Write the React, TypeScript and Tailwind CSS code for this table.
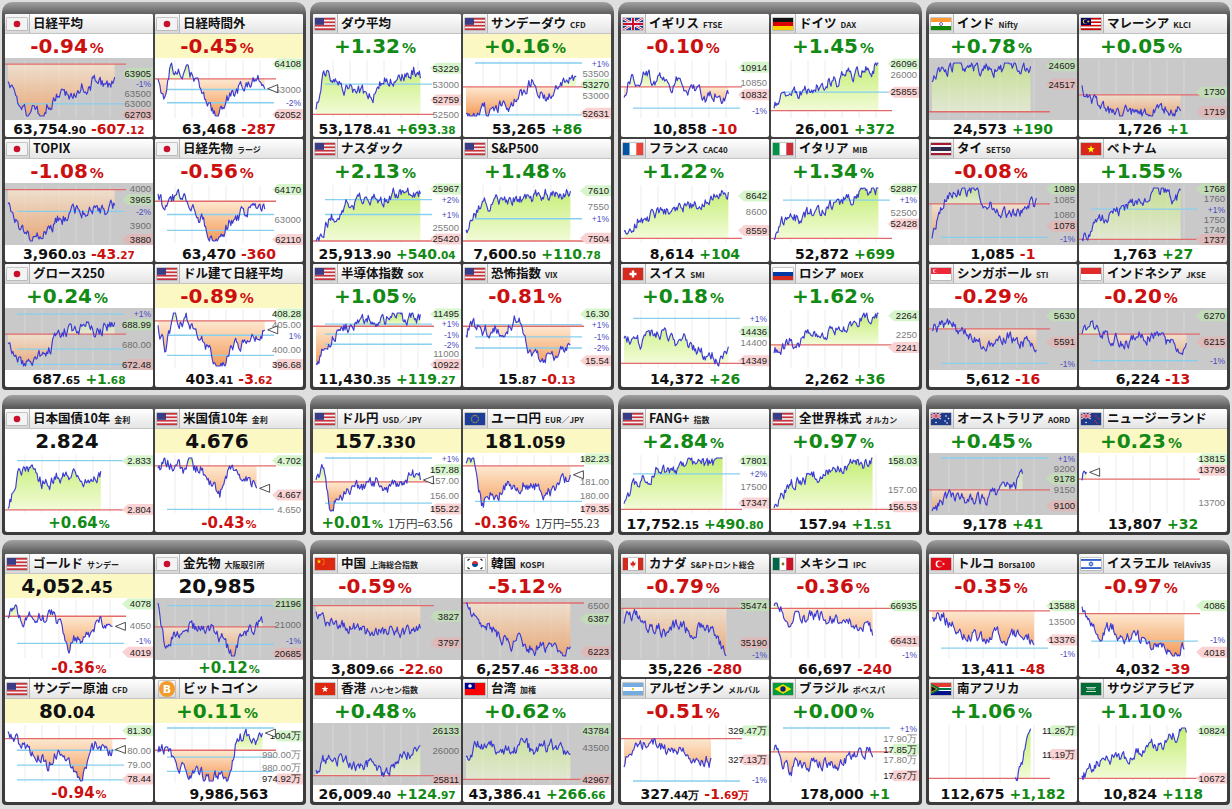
import React from 'react';

// one tile of the market board
type D = {
  f: string;
  t: string;
  s?: string;
  p: string;
  v?: string[];
  c?: string[];
  tv?: string[];
  x?: string;
  g?: number; // market closed -> gray chart
  y?: number; // yellow header band
  m?: number; // last price marker
  a: string; // anchors 0 (high) .. 9 (low)
  b: number; // previous close line
  e?: number;
  st?: number;
  L: string;
  B?: number[];
};

const B1: D[][] = [
  [
    { f: 'jp', t: '日経平均', p: '-0.94', v: ['63,754', '.90'], c: ['-607', '.12'], g: 1, a: '4 6 8 9 8 9 7 6 4 5 5 4 4 3 4 4 3', b: 0.02, e: 0.92, L: 'h 63905 .2|p -1% .39|t 63500 .58|t 63000 .77|l 62703 .97', B: [0.77] },
    { f: 'jp', t: '日経時間外', p: '-0.45', v: ['63,468'], c: ['-287'], y: 1, m: 1, a: '2 6 1 1 2 2 3 5 7 9 8 6 5 4 4 3 3 3', b: 0.3, e: 0.92, L: 'h 64108 .02|t 63000 .5|p -2% .75|l 62052 .97', B: [0.5, 0.75] },
    { f: 'jp', t: 'TOPIX', p: '-1.08', v: ['3,960', '.03'], c: ['-43', '.27'], g: 1, a: '3 6 7 9 8 7 5 5 4 4 3 3 4 3', b: 0.03, e: 0.92, L: 't 4000 .02|h 3965 .22|p -2% .44|t 3900 .72|l 3880 .97', B: [0.44] },
    { f: 'jp', t: '日経先物', s: 'ラージ', p: '-0.56', v: ['63,470'], c: ['-360'], a: '1 4 2 1 2 3 5 7 9 8 6 5 4 3 4 3', b: 0.25, e: 0.92, L: 'h 64170 .03|t 63000 .6|l 62110 .97', B: [0.5, 0.8] },
    { f: 'jp', t: 'グロース250', p: '+0.24', v: ['687', '.65'], c: ['+1', '.68'], g: 1, a: '6 8 9 8 7 6 4 3 3 3 2 3 2 2', b: 0.4, e: 0.92, L: 'p +1% .02|h 688.99 .22|t 680.00 .6|l 672.48 .97', B: [0.02, 0.68, 0.97] },
    { f: 'us', t: 'ドル建て日経平均', p: '-0.89', v: ['403', '.41'], c: ['-3', '.62'], y: 1, m: 1, a: '3 6 1 2 1 3 5 7 9 8 6 5 4 4 3', b: 0.15, e: 0.92, L: 'h 408.28 .02|t 405.00 .22|p 1% .42|t 400.00 .7|l 396.68 .97', B: [0.42, 0.8] },
  ],
  [
    { f: 'us', t: 'ダウ平均', p: '+1.32', v: ['53,178', '.41'], c: ['+693', '.38'], a: '8 1 2 3 4 4 5 5 6 4 3 3 2 2 1 2', b: 0.97, e: 0.9, L: 'h 53229 .1|t 53000 .4|l 52759 .7|t 52500 .97', B: [0.4] },
    { f: 'us', t: 'サンデーダウ', s: 'CFD', p: '+0.16', v: ['53,265'], c: ['+86'], y: 1, a: '9 9 8 8 8 7 7 6 5 3 5 6 4 3 3 2', b: 0.45, e: 0.95, L: 'p +1% .0|t 53500 .2|h 53270 .4|t 53000 .61|l 52631 .95', B: [0, 0.98] },
    { f: 'us', t: 'ナスダック', p: '+2.13', v: ['25,913', '.90'], c: ['+540', '.04'], a: '9 7 5 4 3 3 2 2 2 2 1 1 1 1 1', b: 1, e: 0.9, L: 'h 25967 .02|p +2% .22|p +1% .5|t 25500 .74|l 25420 .96', B: [0.22, 0.5] },
    { f: 'us', t: 'S&P500', p: '+1.48', v: ['7,600', '.50'], c: ['+110', '.78'], a: '7 5 3 3 2 2 2 2 2 1 1 1 1 1', b: 1, e: 0.9, L: 'h 7610 .05|t 7550 .35|p +1% .58|l 7504 .95', B: [0.58] },
    { f: 'us', t: '半導体指数', s: 'SOX', p: '+1.05', v: ['11,430', '.35'], c: ['+119', '.27'], a: '9 6 4 3 2 2 1 1 1 0 1 1 1', b: 0.25, e: 0.9, L: 'h 11495 .02|p +1% .21|p -1% .4|p -2% .59|t 11000 .77|l 10922 .97', B: [0.21, 0.4, 0.59] },
    { f: 'us', t: '恐怖指数', s: 'VIX', p: '-0.81', v: ['15', '.87'], c: ['-0', '.13'], a: '3 2 3 3 2 3 2 0 5 7 8 7 8 6 6', b: 0.25, e: 0.9, L: 'h 16.30 .02|p +1% .22|p -1% .45|p -2% .66|l 15.54 .9', B: [0.22, 0.45, 0.66] },
  ],
  [
    { f: 'gb', t: 'イギリス', s: 'FTSE', p: '-0.10', v: ['10,858'], c: ['-10'], a: '5 2 3 2 3 3 4 3 4 4 5 6 5 6 5', b: 0.45, e: 0.9, L: 'h 10914 .08|t 10850 .38|l 10832 .6|p -1% .9', B: [0.85] },
    { f: 'de', t: 'ドイツ', s: 'DAX', p: '+1.45', v: ['26,001'], c: ['+372'], a: '7 6 5 5 4 4 4 3 3 2 2 1 1 0', b: 0.9, e: 0.9, L: 'h 26096 .02|t 26000 .22|l 25855 .55', B: [0.55] },
    { f: 'fr', t: 'フランス', s: 'CAC40', p: '+1.22', v: ['8,614'], c: ['+104'], a: '8 6 5 5 4 4 3 3 3 2 1 1 1', b: 0.95, e: 0.9, L: 'h 8642 .15|t 8600 .45|l 8559 .8' },
    { f: 'it', t: 'イタリア', s: 'MIB', p: '+1.34', v: ['52,872'], c: ['+699'], a: '8 6 5 5 4 4 3 3 2 2 1 1 0', b: 0.95, e: 0.9, L: 'h 52887 .02|p +1% .23|t 52500 .46|l 52428 .68', B: [0.23] },
    { f: 'ch', t: 'スイス', s: 'SMI', p: '+0.18', v: ['14,372'], c: ['+26'], a: '5 4 5 4 3 4 5 5 6 7 7 8 7', b: 0.95, e: 0.9, L: 'p +1% .1|h 14436 .35|t 14400 .56|l 14349 .9', B: [0.1] },
    { f: 'ru', t: 'ロシア', s: 'MOEX', p: '+1.62', v: ['2,262'], c: ['+36'], a: '7 6 5 5 4 3 4 3 3 2 2 1 1 0', b: 0.6, e: 0.9, L: 'h 2264 .05|t 2250 .4|l 2241 .65' },
  ],
  [
    { f: 'in', t: 'インド', s: 'Nifty', p: '+0.78', v: ['24,573'], c: ['+190'], g: 1, a: '3 1 1 0 1 1 1 1 1 1 1 1 1', b: 0.92, e: 0.85, L: 'h 24609 .05|l 24517 .4' },
    { f: 'my', t: 'マレーシア', s: 'KLCI', p: '+0.05', v: ['1,726'], c: ['+1'], g: 1, a: '4 6 7 8 9 8 8 9 8 8 8 8', b: 0.6, e: 0.85, L: 'h 1730 .55|l 1719 .92' },
    { f: 'th', t: 'タイ', s: 'SET50', p: '-0.08', v: ['1,085'], c: ['-1'], g: 1, a: '8 3 1 1 1 0 2 3 4 4 4 3 3', b: 0.3, e: 0.9, L: 'h 1089 .02|t 1085 .22|t 1080 .5|l 1078 .72|p -1% .95', B: [0.93] },
    { f: 'vn', t: 'ベトナム', p: '+1.55', v: ['1,763'], c: ['+27'], g: 1, a: '9 7 5 5 4 4 3 3 2 1 0 1 2 1', b: 0.97, e: 0.85, L: 'h 1768 .02|t 1760 .21|p +1% .4|t 1750 .59|t 1740 .78|l 1737 .97', B: [0.4] },
    { f: 'sg', t: 'シンガポール', s: 'STI', p: '-0.29', v: ['5,612'], c: ['-16'], g: 1, a: '3 2 2 3 4 5 5 4 4 5 5 5', b: 0.3, e: 0.9, L: 'h 5630 .05|l 5591 .55|p -1% .95', B: [0.95] },
    { f: 'id', t: 'インドネシア', s: 'JKSE', p: '-0.20', v: ['6,224'], c: ['-13'], g: 1, a: '3 2 3 4 5 5 4 4 4 5 6 5', b: 0.4, e: 0.9, L: 'h 6270 .05|l 6215 .55|p -1% .9', B: [0.9] },
  ],
];

const B2: D[][] = [
  [
    { f: 'jp', t: '日本国債10年', s: '金利', p: '+0.64', tv: ['2.824'], a: '9 3 1 3 4 4 3 3 3 5 4 3', b: 0.98, e: 0.8, L: 'h 2.833 .05|l 2.804 .97', B: [0.05] },
    { f: 'us', t: '米国債10年', s: '金利', p: '-0.43', tv: ['4.676'], y: 1, m: 1, a: '1 1 1 1 2 1 2 2 3 5 7 3 1 3 2 4 5', b: 0.15, e: 0.85, L: 'h 4.702 .05|l 4.667 .7|t 4.650 .97', B: [0.97] },
  ],
  [
    { f: 'us', t: 'ドル円', s: 'USD／JPY', p: '+0.01', tv: ['157', '.330'], x: '1万円=63.56', y: 1, m: 1, a: '3 2 9 6 6 5 5 5 4 5 5 4 4 3 4', b: 0.45, e: 0.9, L: 'p +1% .0|h 157.88 .22|t 157.00 .43|t 156.00 .72|l 155.22 .96', B: [0, 0.85] },
    { f: 'eu', t: 'ユーロ円', s: 'EUR／JPY', p: '-0.36', tv: ['181', '.059'], x: '1万円=55.23', y: 1, m: 1, a: '0 1 8 6 6 5 5 4 5 5 6 6 4 3', b: 0.15, e: 0.9, L: 'h 182.23 .02|t 181.00 .45|t 180.00 .72|l 179.35 .96', B: [0.82] },
  ],
  [
    { f: 'us', t: 'FANG+', s: '指数', p: '+2.84', v: ['17,752', '.15'], c: ['+490', '.80'], a: '8 5 4 3 2 2 2 1 1 1 1 1 0', b: 0.97, e: 0.85, L: 'h 17801 .05|p +2% .3|t 17500 .55|l 17347 .85', B: [0.3] },
    { f: 'us', t: '全世界株式', s: 'オルカン', p: '+0.97', v: ['157', '.94'], c: ['+1', '.51'], a: '8 6 5 4 4 3 3 2 2 2 1 1 1 0', b: 0.97, e: 0.85, L: 'h 158.03 .05|t 157.00 .6|l 156.53 .92' },
  ],
  [
    { f: 'au', t: 'オーストラリア', s: 'AORD', p: '+0.45', v: ['9,178'], c: ['+41'], g: 1, a: '9 8 7 7 7 7 7 7 6 6 5 4 3', b: 0.6, e: 0.78, L: 'p +1% .0|t 9200 .2|h 9178 .39|t 9150 .59|l 9100 .9', B: [0] },
    { f: 'nz', t: 'ニュージーランド', p: '+0.23', v: ['13,807'], c: ['+32'], y: 1, m: 1, a: '3 3', b: 0.4, e: 0.04, L: 'h 13815 .02|l 13798 .23|t 13700 .85' },
  ],
];

const B3: D[][] = [
  [
    { f: 'us', t: 'ゴールド', s: 'サンデー', p: '-0.36', tv: ['4,052', '.45'], y: 1, m: 1, a: '2 1 3 2 2 3 2 4 8 6 6 5 3 3 4', b: 0.25, e: 0.9, L: 'h 4078 .02|t 4050 .42|p -1% .72|l 4019 .93', B: [0.76] },
    { f: 'jp', t: '金先物', s: '大阪取引所', p: '+0.12', tv: ['20,985'], g: 1, a: '0 8 5 5 4 4 4 4 5 7 9 6 5 4 3', b: 0.45, e: 0.9, L: 'h 21196 .02|t 21000 .4|p -1% .72|l 20685 .95', B: [0.05, 0.78] },
    { f: 'us', t: 'サンデー原油', s: 'CFD', p: '-0.94', tv: ['80', '.04'], y: 1, m: 1, a: '1 2 3 4 5 6 4 5 7 9 5 3 4 4', b: 0.2, e: 0.9, L: 'h 81.30 .05|t 80.00 .42|t 79.00 .7|l 78.44 .96', B: [0.42, 0.7, 0.98] },
    { f: 'btc', t: 'ビットコイン', p: '+0.11', v: ['9,986,563'], y: 1, m: 1, a: '4 3 6 7 8 8 9 8 9 2 1 2 2', b: 0.42, e: 0.9, L: 'h 1004万 .15|t 990.00万 .5|t 980.00万 .74|l 974.92万 .96', B: [0, 0.55, 0.82] },
  ],
  [
    { f: 'cn', t: '中国', s: '上海総合指数', p: '-0.59', v: ['3,809', '.66'], c: ['-22', '.60'], g: 1, a: '2 3 3 4 4 5 5 5 4 5 5 4', b: 0.05, e: 0.9, L: 'h 3827 .25|l 3797 .75' },
    { f: 'kr', t: '韓国', s: 'KOSPI', p: '-5.12', v: ['6,257', '.46'], c: ['-338', '.00'], g: 1, a: '0 2 3 4 5 6 7 6 7 8 7 8 7 9 7', b: 0, e: 0.9, L: 't 6500 .05|h 6387 .3|l 6223 .92' },
    { f: 'hk', t: '香港', s: 'ハンセン指数', p: '+0.48', v: ['26,009', '.40'], c: ['+124', '.97'], g: 1, a: '7 5 6 5 6 7 6 7 8 6 5 4 4', b: 0.9, e: 0.9, L: 'h 26133 .05|t 26000 .42|l 25811 .97' },
    { f: 'tw', t: '台湾', s: '加権', p: '+0.62', v: ['43,386', '.41'], c: ['+266', '.66'], g: 1, a: '5 3 3 3 4 4 3 4 3 3 4 5', b: 0.97, e: 0.9, L: 'h 43784 .05|t 43500 .38|l 42967 .97' },
  ],
  [
    { f: 'ca', t: 'カナダ', s: 'S&Pトロント総合', p: '-0.79', v: ['35,226'], c: ['-280'], g: 1, a: '3 2 3 4 4 5 4 4 5 4 5 6 9', b: 0.1, e: 0.88, L: 'h 35474 .05|l 35190 .75|p -1% .97' },
    { f: 'mx', t: 'メキシコ', s: 'IPC', p: '-0.36', v: ['66,697'], c: ['-240'], a: '1 1 3 2 3 2 2 3 3 3 4 4 5', b: 0.1, e: 0.85, L: 'h 66935 .05|l 66431 .72|p -1% .97' },
    { f: 'ar', t: 'アルゼンチン', s: 'メルバル', p: '-0.51', v: ['327', '.44万'], c: ['-1', '.69万'], a: '6 4 3 2 2 3 4 4 3 5 6 5 6', b: 0.2, e: 0.75, L: 'h 329.47万 .05|l 327.13万 .6|p -1% 1', B: [1] },
    { f: 'br', t: 'ブラジル', s: 'ボベスパ', p: '+0.00', v: ['178,000'], c: ['+1'], a: '3 6 7 6 6 6 6 6 6 5 5 4 4', b: 0.45, e: 0.85, L: 'p +1% .0|t 17.90万 .2|h 17.85万 .4|t 17.80万 .6|l 17.67万 .9', B: [0] },
  ],
  [
    { f: 'tr', t: 'トルコ', s: 'Borsa100', p: '-0.35', v: ['13,411'], c: ['-48'], a: '3 2 4 5 5 6 5 6 5 6 6', b: 0.15, e: 0.88, L: 'h 13588 .05|t 13500 .35|l 13376 .7|p -1% .95', B: [0.85] },
    { f: 'il', t: 'イスラエル', s: 'TelAviv35', p: '-0.97', v: ['4,032'], c: ['-39'], a: '0 4 5 4 5 6 6 7 7 8 9 7', b: 0.2, e: 0.88, L: 'h 4086 .05|p -1% .7|l 4018 .93', B: [0.72] },
    { f: 'za', t: '南アフリカ', p: '+1.06', v: ['112,675'], c: ['+1,182'], a: '9 7 5 3 1', b: 0.95, st: 0.72, e: 0.85, L: 'h 11.26万 .05|l 11.19万 .5' },
    { f: 'sa', t: 'サウジアラビア', p: '+1.10', v: ['10,824'], c: ['+118'], a: '8 7 6 5 5 5 4 4 3 3 2 1 0', b: 0.95, e: 0.9, L: 'h 10824 .05|l 10672 .95' },
  ],
];

const X0 = 3;
const XW = 116;
const Y = (f: number) => 5 + f * 53;

function mulberry(a: number) {
  return () => {
    a |= 0;
    a = (a + 0x6d2b79f5) | 0;
    let t = Math.imul(a ^ (a >>> 15), 1 | a);
    t = (t + Math.imul(t ^ (t >>> 7), 61 | t)) ^ t;
    return ((t ^ (t >>> 14)) >>> 0) / 4294967296;
  };
}

const hash = (s: string) => {
  let h = 7;
  for (const ch of s) h = (h * 31 + ch.charCodeAt(0)) | 0;
  return h;
};

const star = (cx: number, cy: number, R: number) =>
  Array.from({ length: 10 }, (_, i) => {
    const rr = i % 2 ? R * 0.4 : R;
    const an = -Math.PI / 2 + (i * Math.PI) / 5;
    return `${(cx + rr * Math.cos(an)).toFixed(2)},${(cy + rr * Math.sin(an)).toFixed(2)}`;
  }).join(' ');

const hz = (cols: string[]) =>
  cols.map((c, i) => <rect key={i} y={(i * 12) / cols.length} width="20" height={12 / cols.length + 0.1} fill={c} />);
const vt = (cols: string[]) =>
  cols.map((c, i) => <rect key={i} x={(i * 20) / cols.length} width={20 / cols.length + 0.1} height="12" fill={c} />);

const union = (
  <>
    <rect width="20" height="12" fill="#1d3b8a" />
    <path d="M0 0L20 12M20 0L0 12" stroke="#fff" strokeWidth="2.4" />
    <path d="M0 0L20 12M20 0L0 12" stroke="#c8102e" strokeWidth="0.8" />
    <path d="M10 0V12M0 6H20" stroke="#fff" strokeWidth="3.6" />
    <path d="M10 0V12M0 6H20" stroke="#c8102e" strokeWidth="2" />
  </>
);

function Flag({ c }: { c: string }) {
  if (c === 'btc')
    return (
      <svg width="16" height="16" viewBox="0 0 16 16" className="block">
        <circle cx="8" cy="8" r="8" fill="#f39a2c" />
        <text x="8" y="12" fontSize="11" fontWeight="bold" fill="#fff" textAnchor="middle" fontFamily="DejaVu Sans, sans-serif">
          B
        </text>
      </svg>
    );
  let k: React.ReactNode = null;
  switch (c) {
    case 'jp':
      k = (
        <>
          <rect width="20" height="12" fill="#f3f3f3" />
          <circle cx="10" cy="6" r="3.3" fill="#c8102e" />
        </>
      );
      break;
    case 'us':
      k = (
        <>
          <rect width="20" height="12" fill="#c8323c" />
          {[1, 3, 5].map((i) => (
            <rect key={i} y={(i * 12) / 7} width="20" height={12 / 7} fill="#f4f4f4" />
          ))}
          <rect width="9" height={48 / 7} fill="#3a3d86" />
        </>
      );
      break;
    case 'gb':
      k = union;
      break;
    case 'de':
      k = hz(['#111', '#dd0000', '#ffce00']);
      break;
    case 'in':
      k = (
        <>
          {hz(['#ff9933', '#fff', '#138808'])}
          <circle cx="10" cy="6" r="1.5" fill="none" stroke="#000080" strokeWidth="0.6" />
        </>
      );
      break;
    case 'my':
      k = (
        <>
          {hz(['#cc0001', '#fff', '#cc0001', '#fff', '#cc0001', '#fff', '#cc0001'])}
          <rect width="10" height="7" fill="#010066" />
          <circle cx="4" cy="3.5" r="2.3" fill="#fc0" />
          <circle cx="4.8" cy="3.5" r="1.9" fill="#010066" />
          <circle cx="7.3" cy="3.5" r="1.1" fill="#fc0" />
        </>
      );
      break;
    case 'fr':
      k = vt(['#0055a4', '#fff', '#ef4135']);
      break;
    case 'it':
      k = vt(['#009246', '#fff', '#ce2b37']);
      break;
    case 'th':
      k = hz(['#a51931', '#f4f5f8', '#2d2a4a', '#2d2a4a', '#f4f5f8', '#a51931']);
      break;
    case 'vn':
      k = (
        <>
          <rect width="20" height="12" fill="#da251d" />
          <polygon points={star(10, 6.3, 4)} fill="#ff0" />
        </>
      );
      break;
    case 'ch':
      k = (
        <>
          <rect width="20" height="12" fill="#d52b1e" />
          <rect x="8.8" y="2.5" width="2.4" height="7" fill="#fff" />
          <rect x="6.5" y="4.8" width="7" height="2.4" fill="#fff" />
        </>
      );
      break;
    case 'ru':
      k = hz(['#fff', '#0039a6', '#d52b1e']);
      break;
    case 'sg':
      k = (
        <>
          {hz(['#ed2939', '#fff'])}
          <circle cx="4" cy="3" r="2" fill="#fff" />
          <circle cx="4.9" cy="3" r="1.8" fill="#ed2939" />
        </>
      );
      break;
    case 'id':
      k = hz(['#e12a2a', '#fff']);
      break;
    case 'eu':
      k = (
        <>
          <rect width="20" height="12" fill="#1d3d9a" />
          {Array.from({ length: 12 }, (_, i) => (
            <circle key={i} cx={10 + 3.6 * Math.cos((i * Math.PI) / 6)} cy={6 + 3.6 * Math.sin((i * Math.PI) / 6)} r="0.55" fill="#fc0" />
          ))}
        </>
      );
      break;
    case 'au':
    case 'nz':
      k = (
        <>
          <rect width="20" height="12" fill="#1d3b8a" />
          <g transform="scale(0.5)">{union}</g>
          {[
            [15, 3],
            [17.5, 5.5],
            [14, 8],
            [16, 10],
            [5, 9.5],
          ].map(([x, y], i) => (
            <circle key={i} cx={x} cy={y} r="0.8" fill={c === 'nz' && i < 4 ? '#e0313b' : '#fff'} />
          ))}
        </>
      );
      break;
    case 'cn':
      k = (
        <>
          <rect width="20" height="12" fill="#de2910" />
          <polygon points={star(4, 3.5, 2.4)} fill="#ffde00" />
          <circle cx="8" cy="1.5" r="0.5" fill="#ffde00" />
          <circle cx="9" cy="3" r="0.5" fill="#ffde00" />
          <circle cx="9" cy="5" r="0.5" fill="#ffde00" />
          <circle cx="8" cy="6.5" r="0.5" fill="#ffde00" />
        </>
      );
      break;
    case 'kr':
      k = (
        <>
          <rect width="20" height="12" fill="#fff" />
          <path d="M7 6A3 3 0 0 1 13 6Z" fill="#cd2e3a" />
          <path d="M7 6A3 3 0 0 0 13 6Z" fill="#0047a0" />
          <path d="M2.5 2.5L4.5 1M15.5 1L17.5 2.5M2.5 9.5L4.5 11M15.5 11L17.5 9.5" stroke="#111" strokeWidth="1.2" />
        </>
      );
      break;
    case 'ca':
      k = (
        <>
          {vt(['#d52b1e', '#fff', '#fff', '#d52b1e'])}
          <polygon points="10,2.5 11.3,5 12.8,4.5 12,7.5 10.4,7.5 10.4,9.5 9.6,9.5 9.6,7.5 8,7.5 7.2,4.5 8.7,5" fill="#d52b1e" />
        </>
      );
      break;
    case 'mx':
      k = (
        <>
          {vt(['#006847', '#fff', '#ce1126'])}
          <circle cx="10" cy="6" r="1.4" fill="#8a6a2b" />
        </>
      );
      break;
    case 'tr':
      k = (
        <>
          <rect width="20" height="12" fill="#e30a17" />
          <circle cx="8" cy="6" r="3.4" fill="#fff" />
          <circle cx="8.9" cy="6" r="2.7" fill="#e30a17" />
          <polygon points={star(12.6, 6, 1.5)} fill="#fff" />
        </>
      );
      break;
    case 'il':
      k = (
        <>
          <rect width="20" height="12" fill="#fff" />
          <rect y="1.2" width="20" height="1.5" fill="#0038b8" />
          <rect y="9.3" width="20" height="1.5" fill="#0038b8" />
          <path d="M10 3.6L12.1 7.2H7.9ZM10 8.4L7.9 4.8H12.1Z" fill="none" stroke="#0038b8" strokeWidth="0.6" />
        </>
      );
      break;
    case 'hk':
      k = (
        <>
          <rect width="20" height="12" fill="#de2910" />
          <polygon points={star(10, 6.2, 3.6)} fill="#fff" />
        </>
      );
      break;
    case 'tw':
      k = (
        <>
          <rect width="20" height="12" fill="#fe0000" />
          <rect width="10" height="6" fill="#000095" />
          <circle cx="5" cy="3" r="1.8" fill="#fff" />
        </>
      );
      break;
    case 'ar':
      k = (
        <>
          {hz(['#74acdf', '#fff', '#74acdf'])}
          <circle cx="10" cy="6" r="1.1" fill="#f6b40e" />
        </>
      );
      break;
    case 'br':
      k = (
        <>
          <rect width="20" height="12" fill="#009c3b" />
          <polygon points="10,1.3 18.5,6 10,10.7 1.5,6" fill="#ffdf00" />
          <circle cx="10" cy="6" r="2.7" fill="#002776" />
        </>
      );
      break;
    case 'za':
      k = (
        <>
          {hz(['#e03c31', '#fff', '#001489'])}
          <polygon points="0,0.8 9,5 20,5 20,7 9,7 0,11.2" fill="#007749" />
          <polygon points="0,2.6 6,6 0,9.4" fill="#111" stroke="#ffb612" strokeWidth="0.7" />
        </>
      );
      break;
    case 'sa':
      k = (
        <>
          <rect width="20" height="12" fill="#006c35" />
          <path d="M5 4.5H15M6 6H14" stroke="#fff" strokeWidth="0.7" />
          <rect x="5" y="8" width="10" height="0.8" fill="#fff" />
        </>
      );
      break;
  }
  return (
    <svg width="20" height="12" viewBox="0 0 20 12" className="block">
      {k}
    </svg>
  );
}

function Chart({ d, id }: { d: D; id: string }) {
  const r = mulberry(hash(d.t) + 17);
  const A = d.a.split(' ').map((v) => +v / 9);
  const st = d.st ?? 0;
  const e = d.e ?? 0.88;
  const n = Math.max(3, Math.round(120 * (e - st)));
  const pts: number[][] = [];
  let w = 0;
  for (let i = 0; i <= n; i++) {
    const u = i / n;
    const pos = u * (A.length - 1);
    const k = Math.min(A.length - 2, Math.floor(pos));
    const base = A[k] + (A[k + 1] - A[k]) * (pos - k);
    w = w * 0.6 + (r() - 0.5) * 0.2;
    const f = Math.min(1, Math.max(0, base + w));
    pts.push([X0 + (st + (e - st) * u) * XW, Y(f)]);
  }
  const yb = Y(d.b);
  const last = pts[pts.length - 1];
  const line = pts.map((p, i) => `${i ? 'L' : 'M'}${p[0].toFixed(1)} ${p[1].toFixed(1)}`).join('');
  const area = `M${pts[0][0].toFixed(1)} ${yb}` + pts.map((p) => `L${p[0].toFixed(1)} ${p[1].toFixed(1)}`).join('') + `L${last[0].toFixed(1)} ${yb}Z`;
  const labels = d.L.split('|').map((s) => s.split(' '));
  const gray = !!d.g;
  return (
    <svg width="148" height="62" viewBox="0 0 148 62" className="block">
      <defs>
        <linearGradient id={`g${id}`} gradientUnits="userSpaceOnUse" x1="0" y1="5" x2="0" y2={yb}>
          <stop offset="0" stopColor="#c4ee72" />
          <stop offset="1" stopColor="#f2fbd8" />
        </linearGradient>
        <linearGradient id={`o${id}`} gradientUnits="userSpaceOnUse" x1="0" y1={yb} x2="0" y2="58">
          <stop offset="0" stopColor="#fde8d0" />
          <stop offset="1" stopColor="#f49a58" />
        </linearGradient>
        <clipPath id={`a${id}`}>
          <rect x="0" y="0" width="148" height={yb} />
        </clipPath>
        <clipPath id={`b${id}`}>
          <rect x="0" y={yb} width="148" height={62 - yb} />
        </clipPath>
      </defs>
      {gray && <rect width="148" height="62" fill="#c9c9c9" />}
      {[20, 37, 54, 71, 88, 105].map((x) => (
        <line key={x} x1={x} x2={x} y1="2" y2="60" stroke={gray ? '#d6d6d6' : '#ececec'} strokeWidth="1" />
      ))}
      <path d={area} fill={`url(#g${id})`} opacity={gray ? 0.6 : 1} clipPath={`url(#a${id})`} />
      <path d={area} fill={`url(#o${id})`} opacity={gray ? 0.7 : 1} clipPath={`url(#b${id})`} />
      {(d.B ?? []).map((f, i) => (
        <line key={i} x1="12" x2="119" y1={Y(f)} y2={Y(f)} stroke="#86cfee" strokeWidth="1.3" />
      ))}
      <line x1="0" x2="121" y1={yb} y2={yb} stroke="#e36a6a" strokeWidth="1.3" />
      <path d={line} fill="none" stroke="#3a3ad4" strokeWidth="1.15" strokeLinejoin="round" />
      {labels.map(([k, txt, fs], i) => {
        const y = Math.min(56.5, Math.max(5.5, Y(+fs)));
        const pill = k === 'h' ? (gray ? '#c2dcb9' : '#d7f5cc') : k === 'l' ? (gray ? '#ddb9b9' : '#f9d3d3') : '';
        return (
          <g key={i}>
            {pill && <path d={`M117 ${y}L123 ${y - 5.5}H148V${y + 5.5}H123Z`} fill={pill} />}
            <text
              x="146"
              y={y + 3.3}
              textAnchor="end"
              fontSize={k === 'p' ? 8.5 : 9.5}
              fontFamily="Liberation Sans, Arial, sans-serif"
              fill={k === 'p' ? '#4a4ac4' : pill ? '#1a1a1a' : gray ? '#6e6e6e' : '#7c7c7c'}
            >
              {txt}
            </text>
          </g>
        );
      })}
      {d.m && (
        <polygon
          points={`${last[0] + 3},${last[1]} ${last[0] + 13},${last[1] - 4} ${last[0] + 13},${last[1] + 4}`}
          fill="#fff"
          stroke="#222"
          strokeWidth="0.8"
        />
      )}
    </svg>
  );
}

const up = (s: string) => !s.startsWith('-');

function Pct({ p, big }: { p: string; big?: boolean }) {
  return (
    <span className={`flex items-baseline font-bold ${up(p) ? 'text-[#128a14]' : 'text-[#cc1010]'}`}>
      <span className={big ? 'text-[20px]' : 'text-[15px]'}>{p}</span>
      <span className={big ? 'ml-[2px] text-[14px]' : 'ml-[1px] text-[11px]'}>%</span>
    </span>
  );
}

function Num({ v, cls }: { v: string[]; cls: string }) {
  return (
    <span className={`flex items-baseline font-bold ${cls}`}>
      <span className="text-[14px]">{v[0]}</span>
      {v[1] && <span className="text-[10.5px]">{v[1]}</span>}
    </span>
  );
}

function Card({ d, id }: { d: D; id: string }) {
  return (
    <div className="flex h-[123px] w-[148px] flex-col overflow-hidden rounded-[2px] bg-white font-['DejaVu_Sans',sans-serif]">
      <div className="flex h-[20px] shrink-0 items-center overflow-hidden whitespace-nowrap border-b border-[#c4c4c4] bg-[linear-gradient(#ffffff,#e4e4e4)]">
        <div className="flex h-full w-[25px] shrink-0 items-center justify-center border-r border-[#b4b4b4] bg-[linear-gradient(#fafafa,#d6d6d6)]">
          <div className="shadow-[0_0_0_0.5px_#9a9a9a]">
            <Flag c={d.f} />
          </div>
        </div>
        <span className="ml-[3px] font-['Noto_Sans_CJK_JP',sans-serif] text-[12.5px] font-bold leading-none text-[#111]">{d.t}</span>
        {d.s && <span className="ml-[4px] mt-[2px] font-['Noto_Sans_CJK_JP',sans-serif] text-[8px] font-bold leading-none text-[#222]">{d.s}</span>}
      </div>
      <div className={`flex h-[24px] shrink-0 items-center justify-center pr-[24px] leading-none ${d.y ? 'bg-[#fbf8c4]' : ''}`}>
        {d.tv ? (
          <span className="flex items-baseline font-bold text-[#111]">
            <span className="text-[20px]">{d.tv[0]}</span>
            {d.tv[1] && <span className="text-[16px]">{d.tv[1]}</span>}
          </span>
        ) : (
          <Pct p={d.p} big />
        )}
      </div>
      <Chart d={d} id={id} />
      <div className="flex h-[17px] shrink-0 items-center justify-center gap-[5px] whitespace-nowrap leading-none">
        {d.tv ? (
          <>
            <Pct p={d.p} />
            {d.x && <span className="font-['Noto_Sans_CJK_JP',sans-serif] text-[11.5px] text-[#333]">{d.x}</span>}
          </>
        ) : (
          <>
            {d.v && <Num v={d.v} cls="text-[#111]" />}
            {d.c && <Num v={d.c} cls={up(d.c[0]) ? 'text-[#128a14]' : 'text-[#cc1010]'} />}
          </>
        )}
      </div>
    </div>
  );
}

function Group({ items, pad, gid }: { items: D[]; pad: string; gid: string }) {
  return (
    <div className={`w-[304px] rounded-t-[10px] rounded-b-[4px] bg-[linear-gradient(#a2a2a2,#5e5e5e_12px,#444444_26px,#3b3b3b)] px-[3px] pb-[3px] ${pad}`}>
      <div className="grid grid-cols-2 gap-[2px]">
        {items.map((d, i) => (
          <Card key={i} d={d} id={`${gid}-${i}`} />
        ))}
      </div>
    </div>
  );
}

export default function App() {
  return (
    <div className="flex h-[809px] w-[1232px] flex-col gap-[5px] overflow-hidden bg-[#dedede] px-[2px] pt-[2px]">
      <div className="flex gap-[4px]">
        {B1.map((g, i) => (
          <Group key={i} items={g} pad="pt-[12px]" gid={`a${i}`} />
        ))}
      </div>
      <div className="flex gap-[4px]">
        {B2.map((g, i) => (
          <Group key={i} items={g} pad="pt-[14px]" gid={`b${i}`} />
        ))}
      </div>
      <div className="flex gap-[4px]">
        {B3.map((g, i) => (
          <Group key={i} items={g} pad="pt-[14px]" gid={`c${i}`} />
        ))}
      </div>
    </div>
  );
}
